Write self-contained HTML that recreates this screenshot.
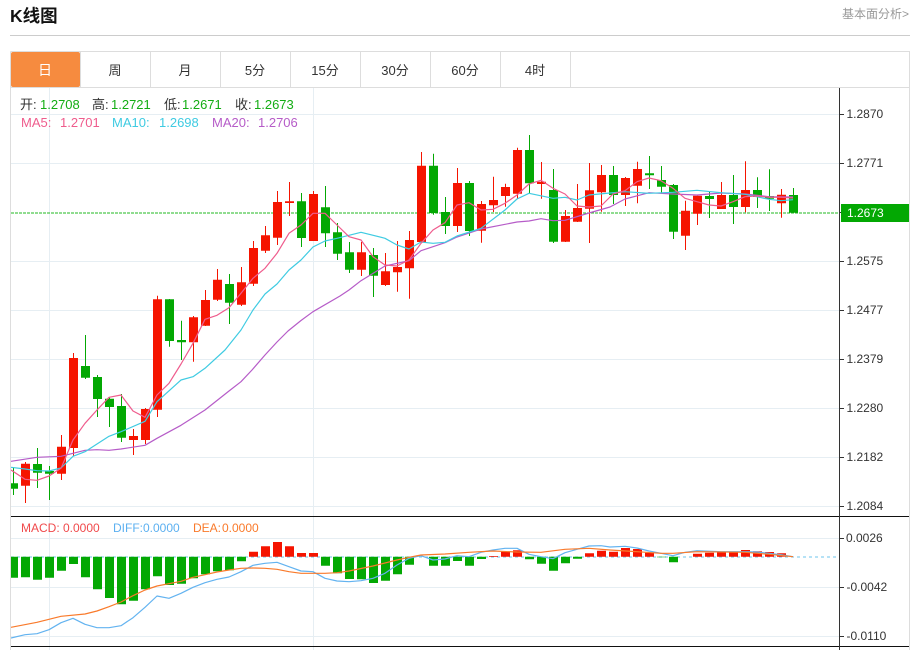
<!DOCTYPE html>
<html lang="zh">
<head>
<meta charset="utf-8">
<title>K线图</title>
<style>
html,body{margin:0;padding:0;background:#fff;width:920px;height:650px;overflow:hidden}
svg{display:block}
text{font-family:"Liberation Sans","Noto Sans CJK SC",sans-serif}
</style>
</head>
<body>
<svg width="920" height="650" viewBox="0 0 920 650" xmlns="http://www.w3.org/2000/svg">
<defs><clipPath id="c"><rect x="11" y="88" width="828" height="562"/></clipPath></defs>
<text x="10" y="22" font-size="17.5" font-weight="bold" fill="#111">K线图</text>
<text x="909" y="18" font-size="12" fill="#999" text-anchor="end">基本面分析&gt;</text>
<path d="M10 35.5H910" stroke="#ccc" fill="none"/>
<path d="M10.5 51.5H909.5V650M10.5 51.5V650M10.5 87.5H909.5" stroke="#ddd" fill="none"/>
<path d="M80.5 52V87M150.5 52V87M220.5 52V87M290.5 52V87M360.5 52V87M430.5 52V87M500.5 52V87M570.5 52V87" stroke="#ddd" fill="none"/>
<rect x="11" y="52" width="69" height="35" rx="2" fill="#f68b3f"/>
<g font-size="13" fill="#333" text-anchor="middle">
<text x="45" y="75" fill="#fff" font-size="14">日</text>
<text x="115" y="75">周</text>
<text x="185" y="75">月</text>
<text x="255" y="75">5分</text>
<text x="325" y="75">15分</text>
<text x="395" y="75">30分</text>
<text x="465" y="75">60分</text>
<text x="535" y="75">4时</text>
</g>
<path d="M11 114.5H839M11 163.5H839M11 261.5H839M11 310.5H839M11 359.5H839M11 408.5H839M11 457.5H839M11 506.5H839M11 538.5H839M11 587.5H839M11 636.5H839M49.5 88V650M313.5 88V650" stroke="#e6eef3" fill="none"/>
<path d="M11 213H839" stroke="#22b822" stroke-dasharray="3 1" fill="none"/>
<path d="M11 557H836" stroke="#6cc6ee" stroke-dasharray="3 3" fill="none"/>
<g clip-path="url(#c)">
<path fill="none" stroke="#f51400" d="M25.5 462V503M61.5 435V480M73.5 353V456M133.5 429V455M145.5 408V444M157.5 295.7V417M193.5 316V361.7M205.5 290V326M217.5 269V301M241.5 267V306M253.5 241V286M265.5 226V253M277.5 191V245M289.5 182V216M313.5 191V241M361.5 242V276M385.5 253V286M397.5 241V291.7M409.5 231V298.7M421.5 152V243M457.5 168V232M481.5 201V242.7M493.5 176.7V212M505.5 183.7V206.7M517.5 147.7V199M541.5 162V198.7M565.5 210V242M577.5 184V222M589.5 163V243M601.5 165V211.7M625.5 177V206M637.5 161.7V203.3M685.5 200.7V250M697.5 195.7V225M721.5 182V209M745.5 161.3V212.3M781.5 189V217.7"/>
<path fill="#f51400" d="M21 463.7h9V485.7h-9zM57 446.7h9V473.7h-9zM69 358h9V448h-9zM129 436h9V440h-9zM141 409h9V440h-9zM153 299.3h9V409.7h-9zM189 317.3h9V342.3h-9zM201 300h9V325.7h-9zM213 279.7h9V299.7h-9zM237 282.3h9V304.7h-9zM249 248h9V283.7h-9zM261 235.3h9V250.7h-9zM273 202h9V237.7h-9zM285 201.3h9V203h-9zM309 194h9V241h-9zM357 252.3h9V269.7h-9zM381 271.3h9V285h-9zM393 267h9V272.3h-9zM405 240h9V268.3h-9zM417 165.7h9V242h-9zM453 183h9V226h-9zM477 204h9V230.7h-9zM489 200h9V205.3h-9zM501 187h9V196h-9zM513 150h9V193.7h-9zM537 181.7h9V184h-9zM561 216h9V241.7h-9zM573 208h9V221.7h-9zM585 190.3h9V208.7h-9zM597 175h9V192.3h-9zM621 178h9V195h-9zM633 169h9V185.7h-9zM681 210.7h9V235.7h-9zM693 195.7h9V213.7h-9zM717 195h9V209h-9zM741 190h9V207h-9zM777 194.7h9V203.3h-9z"/>
<path fill="none" stroke="#03a803" d="M13.5 467V495M37.5 448V488M49.5 466V500M85.5 335V379M97.5 375V417M109.5 397V427M121.5 394V442M169.5 299V346.7M181.5 320.7V360M229.5 274V324M301.5 193V247M325.5 186V247M337.5 223V260M349.5 242V273M373.5 248V297M433.5 153.7V214.7M445.5 197V234M469.5 181V236M529.5 135V193M553.5 169V243M613.5 166V204M649.5 156V189M661.5 166V192.7M673.5 184V239M709.5 191.7V218M733.5 175V224M757.5 177.3V208M769.5 169.3V211M793.5 188V212.7"/>
<path fill="#03a803" d="M9 483.3h9V488.7h-9zM33 464h9V472.7h-9zM45 471h9V473.7h-9zM81 366h9V377.7h-9zM93 377h9V399h-9zM105 398.7h9V407h-9zM117 406h9V437.7h-9zM165 299.3h9V341h-9zM177 340h9V342.3h-9zM225 284h9V302.7h-9zM297 201.3h9V238h-9zM321 207.3h9V233.3h-9zM333 232.3h9V253.7h-9zM345 252.3h9V269.7h-9zM369 255h9V275.7h-9zM429 165.7h9V213h-9zM441 212h9V226h-9zM465 183h9V231h-9zM525 150h9V183.3h-9zM549 190h9V241.7h-9zM609 175h9V195h-9zM645 173.3h9V175.3h-9zM657 180h9V186.7h-9zM669 185h9V231.7h-9zM705 196h9V199h-9zM729 195h9V207h-9zM753 190h9V197h-9zM765 196h9V198.7h-9zM789 195h9V212.7h-9z"/>
<polyline fill="none" stroke="#b65cc8" stroke-width="1.2" stroke-linejoin="round" points="11,461.3 37,457.3 61,456.3 73,453.3 85,450.3 97,449.7 109,450.3 121,449 145,445.3 157,438.3 181,425.3 205,410 229,391 241,381.7 252,370 265,355 277,342 288,331 301,320.5 313,311.7 340,296 349,290 361,280.7 385,266 409,260.7 421,250.7 445,242.7 457,237 481,229 517,222 529,221 541,218.7 553,220.7 565,220.3 589,213 610,207 625,199 649,192.7 673,194 697,195 721,193 745,194 769,196.7 793,197"/>
<polyline fill="none" stroke="#3fcbe2" stroke-width="1.2" stroke-linejoin="round" points="11,467.3 25,469 37,470.7 49,471 61,468 73,456.3 85,451.7 97,444 109,436.3 121,431.7 145,421.3 157,401.7 181,380 193,376.7 205,368.3 225,350 241,330 253,310 265,294 277,284 289,270 301,260 313,247 325,241 337,238.3 361,232.3 385,238.3 397,245 409,249 421,242 433,243.3 445,242.3 457,236 481,228.3 505,210 517,199 529,193.3 553,198.3 565,197.3 577,200 589,195 610,193 625,191.7 649,193.3 673,192.3 697,190.3 721,192.7 745,194.3 769,199.3 781,200.7 793,199.7"/>
<polyline fill="none" stroke="#ef5c8d" stroke-width="1.2" stroke-linejoin="round" points="11,470 25,479.3 37,480.3 49,476 61,468.3 73,440 85,423.3 97,410 109,397.3 121,395 133,411 145,417.3 157,395 169,383.3 181,364 193,343.3 205,319.3 217,315.3 229,307.7 241,293.3 253,278.3 265,268.3 277,253.3 289,233.3 301,225 313,213.3 325,213.3 337,225 349,236.7 361,240 373,256.7 385,265 397,266 409,260 421,243.3 433,230 445,222.7 457,205 469,202.7 481,210 493,209.3 505,203.3 517,195 529,184 541,180.3 553,188.3 565,194 577,206 589,207 601,206 613,194 625,190.7 637,181.7 649,178 661,180.7 673,188.3 685,198.3 697,201.7 709,205 721,206 733,201.7 745,196.7 757,196 769,197.3 781,197.3 793,198"/>
<path fill="#03a803" d="M9 556.7h9V577.7h-9zM21 556.7h9V577.3h-9zM33 556.7h9V579.7h-9zM45 556.7h9V577.7h-9zM57 556.7h9V570.7h-9zM69 556.7h9V564h-9zM81 556.7h9V577.3h-9zM93 556.7h9V589.3h-9zM105 556.7h9V598h-9zM117 556.7h9V604.3h-9zM129 556.7h9V600.7h-9zM141 556.7h9V589.3h-9zM153 556.7h9V576.3h-9zM165 556.7h9V585h-9zM177 556.7h9V583.7h-9zM189 556.7h9V578.3h-9zM201 556.7h9V574.3h-9zM213 556.7h9V571.3h-9zM225 556.7h9V570.3h-9zM237 556.7h9V561.3h-9zM321 556.7h9V565.7h-9zM333 556.7h9V573.3h-9zM345 556.7h9V579h-9zM357 556.7h9V579.3h-9zM369 556.7h9V583h-9zM381 556.7h9V580.7h-9zM393 556.7h9V574.3h-9zM405 556.7h9V564.7h-9zM429 556.7h9V565.7h-9zM441 556.7h9V565.7h-9zM453 556.7h9V561h-9zM465 556.7h9V565.7h-9zM477 556.7h9V559h-9zM525 556.7h9V559.3h-9zM537 556.7h9V563.7h-9zM549 556.7h9V570.7h-9zM561 556.7h9V563.3h-9zM573 556.7h9V558.7h-9zM657 556.7h9V557.3h-9zM669 556.7h9V562.3h-9z"/>
<path fill="#f51400" d="M249 551.7h9V556.7h-9zM261 546.3h9V556.7h-9zM273 542h9V556.7h-9zM285 546.3h9V556.7h-9zM297 553h9V556.7h-9zM309 553h9V556.7h-9zM489 556h9V556.7h-9zM501 551.7h9V556.7h-9zM513 550.3h9V556.7h-9zM585 553.3h9V556.7h-9zM597 550.7h9V556.7h-9zM609 551.7h9V556.7h-9zM621 548h9V556.7h-9zM633 549h9V556.7h-9zM645 552.7h9V556.7h-9zM693 553.7h9V556.7h-9zM705 552.7h9V556.7h-9zM717 551.7h9V556.7h-9zM729 552.3h9V556.7h-9zM741 550h9V556.7h-9zM753 551.3h9V556.7h-9zM765 552h9V556.7h-9zM777 553.3h9V556.7h-9z"/>
<polyline fill="none" stroke="#63b3f0" stroke-width="1.2" stroke-linejoin="round" points="11,638 25,634.7 37,633.7 49,629.7 61,622.7 73,618.3 85,624.3 97,627.7 109,627.7 121,625.7 133,617.7 145,607.3 157,596 169,598.3 181,593.3 193,587.3 205,582.7 217,579.3 229,577 241,571.7 253,565.3 265,563.3 277,562.3 289,566.7 301,571 313,571.7 325,578.3 337,581 349,581.7 361,580.7 373,578.3 385,573.3 397,565 409,558.3 421,555.7 433,560 445,559 457,555.7 469,556.7 481,552.3 493,550 505,548.3 517,548.3 529,554.3 541,556.7 553,558.7 565,552.7 577,549.3 589,546 601,545.7 610,547 625,546.3 637,548 649,551 661,553.3 673,555.7 685,552.3 697,550.7 721,551.7 745,551.7 757,552 769,553.3 781,554.7 793,556.7"/>
<polyline fill="none" stroke="#f97a2b" stroke-width="1.2" stroke-linejoin="round" points="11,627.3 37,622.3 61,616.3 85,614 97,611 109,606.7 121,602 133,595.7 145,590 157,586 181,581.3 193,577.3 205,574.7 217,572 229,570 241,568.3 253,568 265,568.3 277,569.3 289,571.7 301,573.3 313,573.3 325,573.3 337,572.7 349,571 373,566 397,560 409,557.3 421,555 445,554 469,552.3 493,551 517,552 541,552.3 565,549.3 589,548.3 610,550 637,551.7 661,553.3 673,553.3 697,551.7 745,552.3 769,554.3 793,556.7"/>
</g>
<path d="M11 516.5H909M11 646.5H909" stroke="#111" fill="none"/>
<path d="M839.5 88V650" stroke="#333" fill="none"/>
<path d="M840 114.5h4M840 163.5h4M840 212.5h4M840 261.5h4M840 310.5h4M840 359.5h4M840 408.5h4M840 457.5h4M840 506.5h4M840 538.5h4M840 587.5h4M840 636.5h4" stroke="#333" fill="none"/>
<rect x="841" y="204" width="68" height="18" fill="#03a803"/>
<g font-size="12" fill="#333">
<text x="846.5" y="118">1.2870</text>
<text x="846.5" y="167">1.2771</text>
<text x="847" y="217" fill="#fff">1.2673</text>
<text x="846.5" y="265">1.2575</text>
<text x="846.5" y="314">1.2477</text>
<text x="846.5" y="363">1.2379</text>
<text x="846.5" y="412">1.2280</text>
<text x="846.5" y="461">1.2182</text>
<text x="846.5" y="510">1.2084</text>
<text x="846" y="542">0.0026</text>
<text x="846.5" y="591">-0.0042</text>
<text x="846.5" y="640">-0.0110</text>
</g>
<g font-size="13">
<text x="20" y="109" fill="#333">开:</text><text x="40" y="109" fill="#14ad14">1.2708</text>
<text x="92" y="109" fill="#333">高:</text><text x="111" y="109" fill="#14ad14">1.2721</text>
<text x="164" y="109" fill="#333">低:</text><text x="182" y="109" fill="#14ad14">1.2671</text>
<text x="235" y="109" fill="#333">收:</text><text x="254" y="109" fill="#14ad14">1.2673</text>
<text x="21" y="127" fill="#ef5c8d">MA5:</text><text x="60" y="127" fill="#ef5c8d">1.2701</text>
<text x="112" y="127" fill="#3fcbe2">MA10:</text><text x="159" y="127" fill="#3fcbe2">1.2698</text>
<text x="212" y="127" fill="#b65cc8">MA20:</text><text x="258" y="127" fill="#b65cc8">1.2706</text>
</g>
<g font-size="12">
<text x="21" y="532" fill="#f0494b">MACD:</text><text x="63" y="532" fill="#f0494b">0.0000</text>
<text x="113" y="532" fill="#5cb0f0">DIFF:</text><text x="143" y="532" fill="#5cb0f0">0.0000</text>
<text x="193" y="532" fill="#f97a2b">DEA:</text><text x="222" y="532" fill="#f97a2b">0.0000</text>
</g>
</svg>
</body>
</html>
